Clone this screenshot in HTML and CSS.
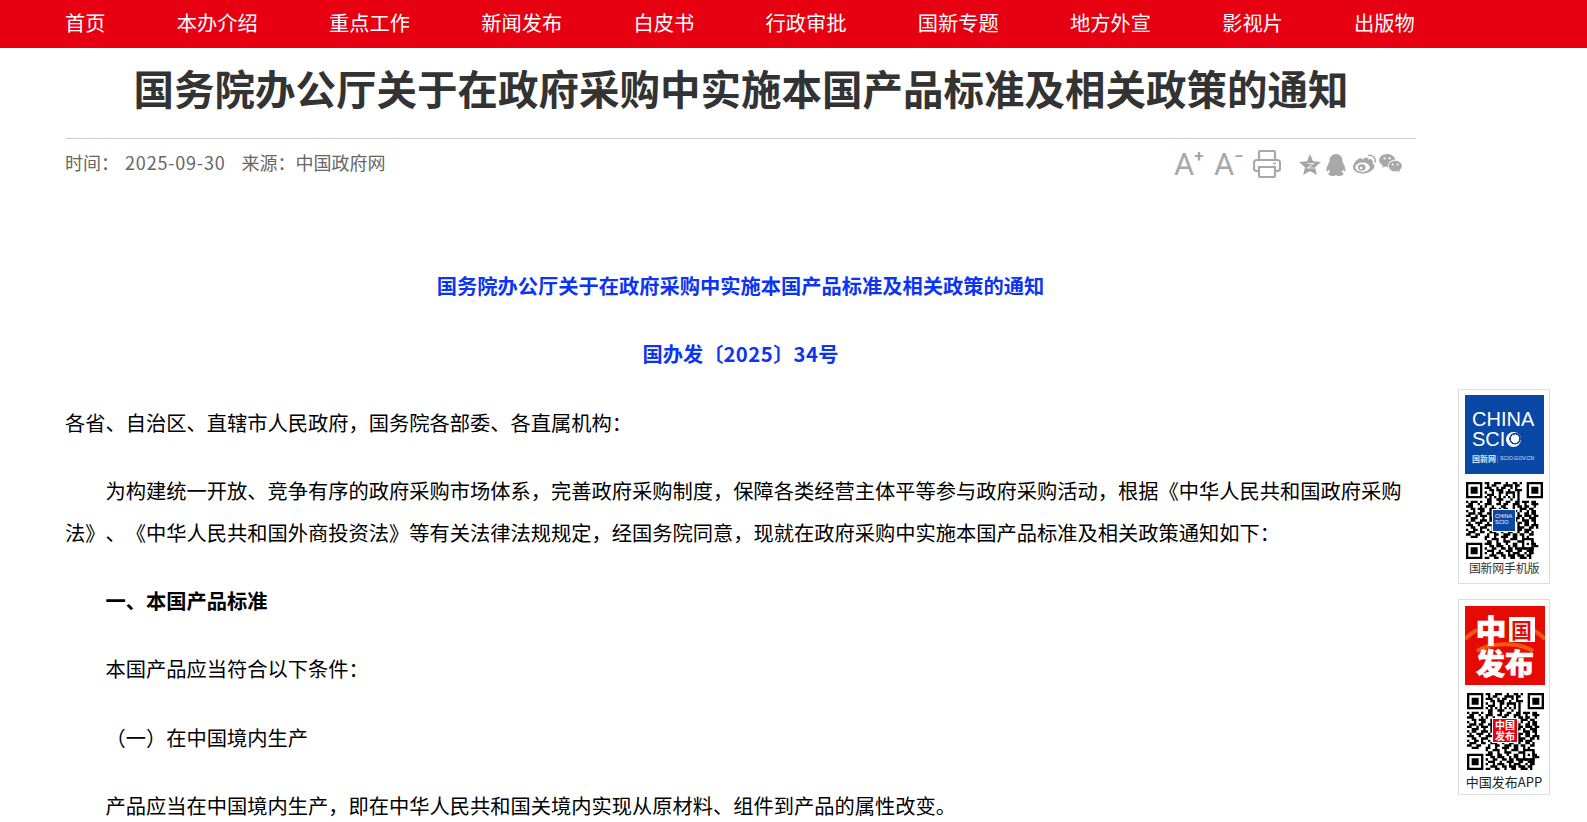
FILE: index.html
```html
<!DOCTYPE html>
<html lang="zh-CN">
<head>
<meta charset="utf-8">
<title>国务院办公厅关于在政府采购中实施本国产品标准及相关政策的通知</title>
<link rel="stylesheet" href="styles.css">
</head>
<body>
<div class="page">
<nav class="nav">
  <div class="wrap nav-row">
    <a>首页</a><a>本办介绍</a><a>重点工作</a><a>新闻发布</a><a>白皮书</a><a>行政审批</a><a>国新专题</a><a>地方外宣</a><a>影视片</a><a>出版物</a>
  </div>
</nav>
<main class="wrap">
  <h1 class="title">国务院办公厅关于在政府采购中实施本国产品标准及相关政策的通知</h1>
  <div class="meta">
    <div class="meta-text"><span class="m-time">时间： <span class="date">2025-09-30</span></span><span>来源：中国政府网</span></div>
    <div class="tools">
      <span class="fs">A<sup>+</sup></span>
      <span class="fs fs2">A<sup>−</sup></span>
      <svg class="i-print" width="28" height="28" viewBox="0 0 28 28" fill="none" stroke="#a8a8a8" stroke-width="2.2"><path d="M6 10V2.500a1.500 1.500 0 0 1 1.500-1.500h13A1.500 1.500 0 0 1 22 2.500V10"/><path d="M6 21H3.500A2.500 2.500 0 0 1 1 18.500V12.500A2.500 2.500 0 0 1 3.500 10h21a2.500 2.500 0 0 1 2.500 2.500v6a2.500 2.500 0 0 1-2.500 2.500H22"/><path d="M6 17h16v8.500a1.500 1.500 0 0 1-1.500 1.500h-13A1.500 1.500 0 0 1 6 25.500z"/><path d="M20 13.500h3" stroke-width="1.500"/></svg>
      <div class="share">
        <svg width="22" height="22" viewBox="0 0 22 22"><path fill="#a4a4a4" d="M11 0l3 7.300 8 .7-6 5.200 1.900 7.800L11 17l-6.900 4L6 13.200 0 8l8-.7z"/><path fill="none" stroke="#e4e4e4" stroke-width="1.200" d="M8 9.500h6.500l-6 4.500h7"/></svg>
        <svg class="qq" width="20" height="22" viewBox="0 0 20 22"><path fill="#a8a8a8" d="M10 0c4 0 6.300 3 6.400 6.500 0 1 .2 1.600.7 2.500 1 1.700 2.300 4.500 2.400 7 0 1.300-.6 1.800-1.300 1-.4-.4-.8-1-1.100-1.600-.3 1-.8 1.900-1.500 2.600 1.100.5 1.900 1.100 1.900 2 0 1.100-2.200 2-4.400 2-1.300 0-2.500-.4-3.100-1h-.1c-.6.600-1.800 1-3.100 1-2.200 0-4.400-.9-4.400-2 0-.9.800-1.500 1.900-2-.7-.7-1.200-1.600-1.500-2.600-.3.600-.7 1.200-1.100 1.600-.7.800-1.300.3-1.300-1 .1-2.500 1.400-5.300 2.400-7 .5-.9.700-1.500.7-2.500C3.700 3 6 0 10 0z"/></svg>
        <svg class="wb" width="25" height="20" viewBox="0 0 25 20"><path fill="#a8a8a8" d="M10.500 5.500c2-1.900 4.300-2.500 5.200-1.500.5.500.5 1.400.2 2.300 2.300-.8 4.300-.5 4.800 1 .2.700.1 1.400-.3 2 1.200.4 2 1.200 2 2.500 0 3.500-4.900 7.700-11.200 7.700C5.800 19.500 1 17 1 13c0-2.300 1.500-4.900 4-7.100 2.200-1.900 4.200-2.400 5.500-.4z"/><ellipse cx="10.500" cy="13.300" rx="7.200" ry="4.700" fill="#fff"/><ellipse cx="9.800" cy="13.500" rx="3.800" ry="3.200" fill="#a8a8a8"/><circle cx="9" cy="14" r="1.300" fill="#fff"/><path fill="none" stroke="#a8a8a8" stroke-width="1.500" d="M16.500 5.500c1.500-.5 3.600 1 3 3M16 1.500c4.500-1.200 8.300 2.700 7 7"/></svg>
        <svg class="wx" width="23" height="19" viewBox="0 0 24 20"><path fill="#a8a8a8" d="M8.500 0C13 0 16.500 2.700 17 6c-3.800-.2-7.500 2.400-7.500 6 0 .5 0 .9.200 1.400-.4.100-.8.100-1.200.1-.9 0-1.800-.1-2.600-.4L3 14.500l.8-2.600C1.500 10.600 0 8.800 0 6.700 0 3 3.800 0 8.500 0z"/><path fill="#a8a8a8" d="M17 7c3.900 0 7 2.500 7 5.600 0 1.800-1.100 3.300-2.800 4.400l.7 2.200-2.500-1.300c-.8.200-1.600.3-2.400.3-3.900 0-7-2.500-7-5.600S13.100 7 17 7z"/><circle cx="5.700" cy="4.700" r="1.200" fill="#fff"/><circle cx="11" cy="4.700" r="1.200" fill="#fff"/><circle cx="14.300" cy="11" r="1" fill="#fff"/><circle cx="19.600" cy="11" r="1" fill="#fff"/></svg>
      </div>
    </div>
  </div>
  <article class="content">
    <p class="head">国务院办公厅关于在政府采购中实施本国产品标准及相关政策的通知</p>
    <p class="head">国办发〔<span class="num">2025</span>〕<span class="num">34</span>号</p>
    <p>各省、自治区、直辖市人民政府，国务院各部委、各直属机构：</p>
    <p class="ind">为构建统一开放、竞争有序的政府采购市场体系，完善政府采购制度，保障各类经营主体平等参与政府采购活动，根据《中华人民共和国政府采购法》、《中华人民共和国外商投资法》等有关法律法规规定，经国务院同意，现就在政府采购中实施本国产品标准及相关政策通知如下：</p>
    <p class="ind"><strong>一、本国产品标准</strong></p>
    <p class="ind">本国产品应当符合以下条件：</p>
    <p class="ind">（一）在中国境内生产</p>
    <p class="ind">产品应当在中国境内生产，即在中华人民共和国关境内实现从原材料、组件到产品的属性改变。</p>
  </article>
</main>

<svg class="defs" width="0" height="0" aria-hidden="true">
  <defs>
    <g id="qr">
      <path fill="#000" fill-rule="evenodd" d="M0 0h7v7H0zM1 1v5h5V1zM2 2h3v3H2zM26 0h7v7h-7zM27 1v5h5V1zM28 2h3v3h-3zM0 26h7v7H0zM1 27v5h5v-5zM2 28h3v3H2zM24 24h5v5h-5zM25 25v3h3v-3zM26 26h1v1h-1z"/>
      <path fill="none" stroke="#000" d="M8 .5h2m2 0h3m2 0h1m2 0h2m1 0h1M9 1.500h1m1 0h2m3 0h4m1 0h2M8 2.500h3m2 0h1m1 0h2m2 0h1m1 0h1M10 3.500h2m1 0h3m2 0h1m2 0h3M8 4.500h1m2 0h1m2 0h2m1 0h4m1 0h1M9 5.500h3m2 0h1m2 0h1m2 0h1m1 0h1M8 6.500h1m1 0h1m1 0h1m1 0h1m1 0h1m1 0h1m1 0h1m1 0h1M9 7.500h2m2 0h3m3 0h1m2 0h1M0 8.500h1m1 0h3m1 0h1m2 0h2m3 0h1m2 0h2m2 0h2m1 0h3m1 0h2M1 9.500h2m2 0h1m2 0h3m2 0h2m1 0h2m2 0h3m2 0h1m2 0h3M0 10.500h3m3 0h1m1 0h1m2 0h1m3 0h2m3 0h1m1 0h2m1 0h2m2 0h1M2 11.500h2m1 0h3m2 0h3m1 0h1m1 0h2m2 0h1m2 0h3m1 0h2M0 12.500h1m2 0h1m2 0h2m2 0h1m9 0h2m1 0h1m2 0h1m1 0h2M1 13.500h3m1 0h2m2 0h2m11 0h1m2 0h2m1 0h2M0 14.500h2m2 0h1m1 0h3m1 0h1m11 0h2m1 0h3m1 0h2M2 15.500h3m2 0h1m2 0h2m9 0h2m1 0h1m2 0h3M0 16.500h1m1 0h2m2 0h3m1 0h2m9 0h1m2 0h3m1 0h2M1 17.500h1m2 0h3m2 0h1m2 0h1m9 0h2m1 0h2m2 0h1M0 18.500h3m2 0h1m2 0h3m1 0h1m9 0h1m2 0h2m1 0h3M2 19.500h2m2 0h3m2 0h2m1 0h1m7 0h3m2 0h2m1 0h1M0 20.500h1m2 0h2m1 0h1m2 0h1m1 0h2m2 0h2m1 0h3m1 0h2m1 0h3M1 21.500h3m2 0h2m2 0h3m2 0h1m2 0h2m2 0h1m2 0h2m1 0h1M0 22.500h2m2 0h2m3 0h1m2 0h2m2 0h3m1 0h2m1 0h2m2 0h2M2 23.500h3m3 0h2m2 0h1m2 0h3m2 0h2m2 0h1m1 0h1M8 24.500h1m2 0h3m2 0h1m2 0h3M9 25.500h2m2 0h1m2 0h3m3 0h2m4 0h1M8 26.500h3m2 0h2m2 0h1m2 0h2m6 0h2M10 27.500h2m1 0h3m2 0h1m1 0h2m7 0h2M8 28.500h1m2 0h2m2 0h2m1 0h2m1 0h3m1 0h1m1 0h2M9 29.500h3m2 0h1m2 0h3m2 0h2m2 0h3M8 30.500h1m2 0h1m1 0h3m2 0h1m1 0h3m2 0h1m1 0h2M10 31.500h3m2 0h2m1 0h3m1 0h3m1 0h2M8 32.500h2m2 0h2m2 0h1m2 0h2m2 0h3m1 0h1"/>
    </g>
  </defs>
</svg>

<aside class="side">
  <div class="card">
    <div class="scio">
      <span class="scio-t">CHINA</span>
      <span class="scio-t">SCI<i class="globe"></i></span>
      <span class="scio-s">国新网<b></b><em>SCIO.GOV.CN</em></span>
    </div>
    <div class="qrbox">
      <svg width="77" height="77" viewBox="0 0 33 33"><use href="#qr"/></svg>
      <div class="qr-logo qr-blue"><span>CHINA</span><span>SCIO</span></div>
    </div>
    <div class="cap cap1">国新网手机版</div>
  </div>
  <div class="card card2">
    <div class="fabu">
      <svg class="fabu-arc" width="80" height="80" viewBox="0 0 80 80" fill="none" stroke="#f0590f" stroke-width="4"><path d="M0 33c4-4 8-7 12-9M80 33c-4-4-8-7-12-9M12 45c14-9 42-9 56 0"/></svg>
      <div class="fabu-top"><span class="fa-zh">中</span><span class="fa-guo">国</span></div>
      <div class="fabu-bot">发布</div>
    </div>
    <div class="qrbox qrbox2">
      <svg width="77" height="77" viewBox="0 0 33 33"><use href="#qr"/></svg>
      <div class="qr-logo qr-red">中国<br>发布</div>
    </div>
    <div class="cap cap2">中国发布APP</div>
  </div>
</aside>
</div>
</body>
</html>
```
FILE: styles.css
```css
* { box-sizing: border-box; }
html, body { margin: 0; padding: 0; background: #fff; }
body { font-family: "Noto Sans CJK SC", "Liberation Sans", sans-serif; color: #000; text-spacing-trim: space-all; }
.page { position: relative; height: 822px; overflow: hidden; }
.wrap { width: 1350px; margin-left: 66px; }
.nav { height: 48px; background: #e60012; }
.nav-row { display: flex; justify-content: space-between; height: 48px; align-items: center; margin-left: 65px; }
.nav-row a { color: #fff; font-size: 20.25px; line-height: 46px; height: 48px; }
.title { margin: 0; height: 91px; padding-top: 11px; font-size: 40.5px; line-height: 58px; font-weight: 700; color: #333; text-align: center; white-space: nowrap; border-bottom: 1px solid #ccc; }
.meta { display: flex; justify-content: space-between; height: 50px; color: #666; font-size: 18px; }
.meta-text { display: flex; gap: 16px; padding-top: 9px; line-height: 28px; margin-left: -1px; }
.m-time { white-space: pre; }
.date { letter-spacing: .8px; margin-left: 2px; }
.tools { display: flex; align-items: flex-start; padding-top: 11px; padding-right: 14px; }
.fs { display: block; width: 40px; font-family: Roboto, sans-serif; font-weight: 400; font-size: 31px; line-height: 30px; color: #a8a8a8; }
.fs2 { width: 39px; }
.fs sup { font-size: 17px; line-height: 0; font-weight: 500; vertical-align: 13px; color: #a0a0a0; }
.i-print { display: block; }
.share { display: flex; align-items: flex-start; margin-left: 18px; padding-top: 4px; gap: 5px; }
.share .wb { margin-left: 1px; }
.share .wx { margin-left: -3px; }
.content { padding-top: 76px; font-size: 20.25px; line-height: 42px; margin-left: -1px; }
.content p { margin: 0 0 26.3px; }
.head { text-align: center; font-weight: 700; color: #0b34f5; }
.num { letter-spacing: .5px; }
.ind { text-indent: 2em; }
.content strong { font-weight: 700; }
.defs { position: absolute; }
.side { position: absolute; left: 1458px; top: 389px; width: 92px; }
.card { width: 92px; border: 1px solid #ddd; background: #fff; padding: 5px 0 0 6px; height: 195px; }
.card2 { margin-top: 15px; height: 196px; padding-top: 6px; }
.scio { width: 79px; height: 79px; background: #0a48a5; color: #fff; padding: 14px 0 0 7px; display: flex; flex-direction: column; font-family: "Liberation Sans", sans-serif; }
.scio-t { font-size: 20px; line-height: 20px; display: flex; align-items: center; height: 20px; font-weight: 400; }
.globe { display: block; width: 15px; height: 15px; border-radius: 50%; background: radial-gradient(circle at 60% 45%, #fff 0 4px, #0a48a5 4.500px 5.500px, #fff 6px); margin-left: 1px; }
.scio-s { font-family: "Noto Sans CJK SC", sans-serif; font-size: 8px; line-height: 9px; font-weight: 700; margin-top: 5px; white-space: nowrap; opacity: .85; display: flex; align-items: center; }
.scio-s b { display: block; flex: none; width: 1px; height: 8px; background: #e33; margin: 0 2px 0 1px; }
.scio-s em { font: normal 5.200px/9px "Liberation Sans", sans-serif; }
.qrbox { position: relative; width: 77px; height: 77px; margin: 8px 0 0 1px; }
.qrbox svg { display: block; }
.qrbox2 { margin: 8px 0 0 2px; }
.qr-logo { position: absolute; color: #fff; }
.qr-blue { left: 27px; top: 28px; width: 22px; height: 21px; background: #0a48a5; font: 5.500px/5.500px "Liberation Sans", sans-serif; padding: 4px 0 0 2px; box-shadow: 0 0 0 1px #fff; display: flex; flex-direction: column; }
.qr-red { left: 26px; top: 26px; width: 24px; height: 23px; background: #e60012; font-size: 10px; line-height: 11px; font-weight: 700; text-align: center; box-shadow: 0 0 0 1px #fff; }
.cap { text-align: center; white-space: nowrap; }
.cap1 { font-size: 12px; letter-spacing: -.3px; line-height: 16px; color: #333; margin: 1px 0 0 -6px; }
.cap2 { font-size: 13px; line-height: 18px; color: #222; margin: 3px 0 0 -6px; }
.fabu { position: relative; width: 80px; height: 79px; background: #e60a05; color: #fff; overflow: hidden; display: flex; flex-direction: column; align-items: center; font-weight: 900; }
.fabu-arc { position: absolute; left: 0; top: 0; }
.fabu-top { position: relative; display: flex; align-items: center; margin-top: 10px; height: 26px; }
.fa-zh { font-size: 31px; line-height: 26px; -webkit-text-stroke: .6px #fff; }
.fa-guo { color: #e60a05; background: #fff; width: 26px; height: 25px; display: flex; align-items: center; justify-content: center; margin-left: 2px; font-size: 21px; line-height: 25px; font-weight: 700; }
.fabu-bot { position: relative; font-size: 29px; line-height: 30px; margin-top: 5px; -webkit-text-stroke: .6px #fff; }
```
